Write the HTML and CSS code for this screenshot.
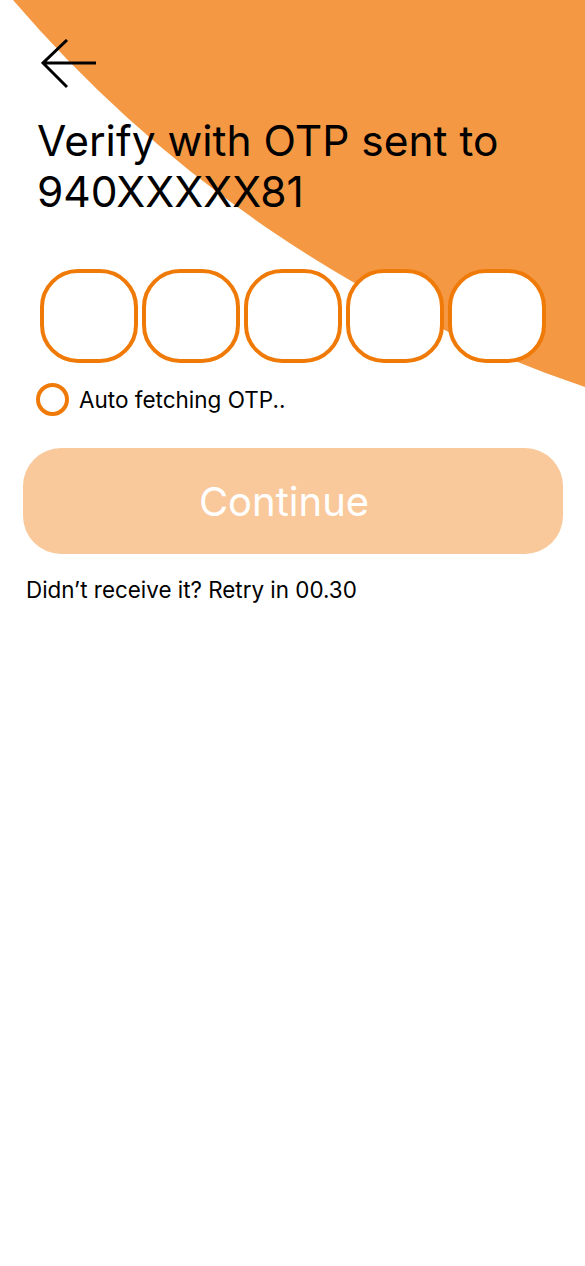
FILE: index.html
```html
<!DOCTYPE html>
<html>
<head>
<meta charset="utf-8">
<link rel="stylesheet" href="styles.css">
</head>
<body>
<svg class="bg" width="585" height="400" viewBox="0 0 585 400">
  <path d="M13,0 A1306,1306 0 0 0 585,387 L585,0 Z" fill="#F49843"/>
</svg>
<main class="screen">
  <button class="back" aria-label="Back">
    <svg width="56" height="50" viewBox="0 0 56 50">
      <path d="M2 24 H55 M26 1 L2 24 L26 48" fill="none" stroke="#000" stroke-width="3"/>
    </svg>
  </button>
  <h1 class="title">Verify with OTP sent to<br>940XXXXX81</h1>
  <div class="otp">
    <div class="box"></div>
    <div class="box"></div>
    <div class="box"></div>
    <div class="box"></div>
    <div class="box"></div>
  </div>
  <div class="auto">
    <span class="ring"></span>
    <span>Auto fetching OTP..</span>
  </div>
  <button class="cta">Continue</button>
  <p class="retry">Didn’t receive it? Retry in 00.30</p>
</main>
</body>
</html>
```
FILE: styles.css
```css
* { box-sizing: border-box; }
html, body { margin: 0; padding: 0; background: #fff; }
body {
  width: 585px;
  height: 1266px;
  position: relative;
  overflow: hidden;
  font-family: Inter, "Noto Sans", sans-serif;
  color: #000;
}
.bg { position: absolute; top: 0; left: 0; }
.screen {
  position: relative;
  display: flex;
  flex-direction: column;
  padding: 39px 22px 0 23px;
}
.back {
  border: 0;
  background: none;
  padding: 0;
  margin-left: 18px;
  width: 56px;
  height: 50px;
  display: block;
}
.back svg { display: block; }
.title {
  margin: 26px 0 0 14px;
  font-weight: 400;
  font-size: 42.5px;
  line-height: 51px;
  letter-spacing: 0;
}
.otp {
  display: flex;
  gap: 4px;
  margin: 52px 0 0 17px;
}
.box {
  width: 98px;
  height: 94px;
  border: 4px solid #F07A08;
  border-radius: 38px;
  background: #fff;
}
.auto {
  display: flex;
  align-items: center;
  gap: 10px;
  margin: 20px 0 0 13px;
  font-size: 22.5px;
}
.ring {
  width: 33px;
  height: 33px;
  border: 4px solid #F07A08;
  border-radius: 50%;
}
.cta {
  margin-top: 32px;
  width: 540px;
  height: 106px;
  border: 0;
  border-radius: 38px;
  background: #F9C99C;
  color: #fff;
  font-family: Inter, "Noto Sans", sans-serif;
  font-size: 40px;
  font-weight: 400;
  padding: 0 18px 0 0;
}
.retry {
  margin: 22px 0 0 3px;
  font-size: 22.4px;
}
```
